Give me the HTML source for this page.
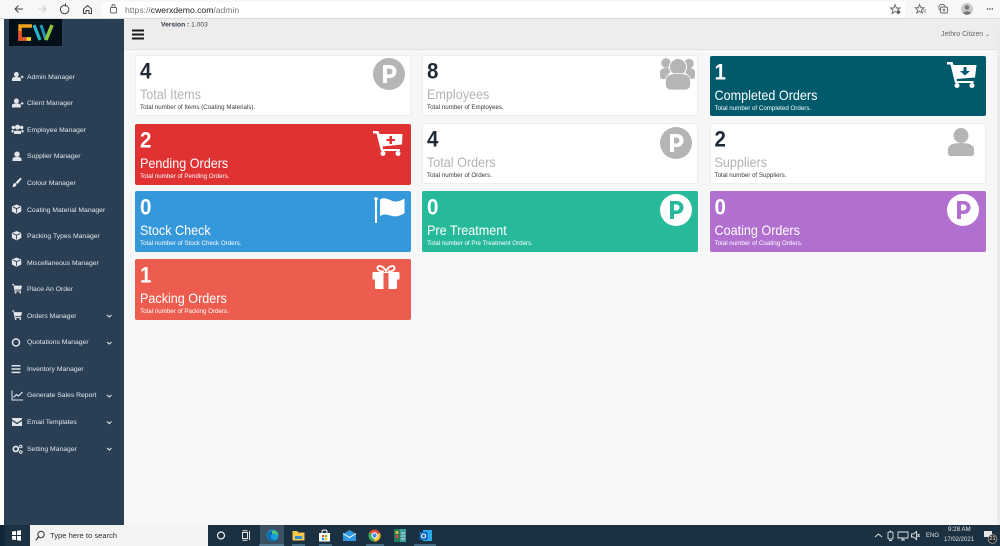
<!DOCTYPE html>
<html><head><meta charset="utf-8"><title>CWerx Admin</title>
<style>
*{box-sizing:border-box}
html{margin:0;padding:0;width:1000px;height:546px;overflow:hidden;background:#f7f7f7}
body{margin:0;padding:0;width:1000px;height:546px;overflow:hidden;background:#f7f7f7;font-family:"Liberation Sans",sans-serif;filter:blur(.3px)}
.a{position:absolute}
#chrome{left:0;top:0;width:1000px;height:19px;background:#f7f7f7;border-bottom:1px solid #dcdcdc}
#addr{left:102px;top:2px;width:803px;height:15px;background:#fff;border-radius:3px}
#url{left:125px;top:3.500px;font-size:8.600px;line-height:12px;color:#777}
#url b{font-weight:400;color:#222}
#leftstrip{left:0;top:19px;width:4px;height:506px;background:#fff}
#side{left:4px;top:19px;width:120px;height:506px;background:#2a3f54}
#logo{left:9px;top:19px;width:53px;height:27px;background:#03101a}
#head{left:124px;top:19px;width:876px;height:31px;background:#ededed;border-bottom:1px solid #e2e2e2}
#ver{left:161px;top:20px;font-size:6.700px;line-height:9px;color:#3f4a55;transform:translateY(.5px)}
#ver b{color:#2e3a46}
#user{left:941px;top:30px;font-size:6.900px;line-height:9px;color:#666}
#sb{left:997px;top:26px;width:3px;height:499px;background:#ebebeb}
.m{position:absolute;left:27px;font-size:6.800px;line-height:9px;color:#e2e6ea;white-space:nowrap}
.c{position:absolute;width:276px;height:61px;border-radius:2px;background:#fff;border:1px solid #eceef0;color:#fff;overflow:hidden}
.n{position:absolute;left:5px;top:4px;font-weight:700;font-size:20.500px;line-height:24px;color:#fff;transform:scaleY(1.08);transform-origin:0 0}
.t{position:absolute;left:5px;top:32px;font-size:12.600px;line-height:16px;color:#fff;white-space:nowrap;transform:scaleY(1.06)}
.d{position:absolute;left:5px;top:48px;font-size:6.200px;line-height:9px;color:#fff;white-space:nowrap}
.w .n{color:#1f2a35;left:4px;top:3px}.w .t{color:#b4b4b4;left:4px;top:31px}.w .d{color:#3a3a3a;left:4px;top:47px}
.col{border:0}
.c svg{position:absolute}
#task{left:0;top:525px;width:1000px;height:21px;background:#1b3040}
#search{left:30px;top:525px;width:178px;height:21px;background:#f3f3f3}
#stxt{left:50px;top:530px;font-size:7.600px;line-height:11px;color:#333}
.tray{position:absolute;color:#e6e6e6;font-size:6.200px;line-height:8px;white-space:nowrap}
</style></head>
<body>
<div class="a" id="chrome"></div>
<div class="a" id="addr"></div>
<svg class="a" style="left:0;top:0" width="125" height="19" fill="none" stroke="#444" stroke-width="1">
<path d="M23 9H15M18.500 5.500L15 9L18.500 12.500"/>
<path d="M38 9H46M42.500 5.500L46 9L42.500 12.500" stroke="#ccc"/>
<path d="M68 7A4.200 4.200 0 1 1 65 5.300M65.500 3.500V6H68"/>
<path d="M83.500 9L87.500 5.500L91.500 9V13.500H89V10.500H86V13.500H83.500Z"/>
<rect x="110.500" y="7.500" width="6" height="5.500" rx="1" stroke="#666"/><path d="M112 7.500V6A1.500 1.500 0 0 1 115 6V7.500" stroke="#666"/>
</svg>
<div class="a" id="url">https://<b>cwerxdemo.com</b>/admin</div>
<svg class="a" style="left:885px;top:0" width="115" height="19" fill="none" stroke="#666" stroke-width=".9">
<path d="M10 4.500L11.500 8H15L12.300 10.200L13.200 13.500L10 11.500L7 13.500L8 10.200L5.500 8H9Z"/><circle cx="13.500" cy="12" r="1.800" fill="#666" stroke="none"/>
<path d="M34.500 4.500L35.800 7.700H39L36.500 9.800L37.300 13L34.500 11.200L31.800 13L32.600 9.800L30.300 7.700H33.500Z"/><path d="M38 10H41M38.500 12H41" stroke-width=".7"/>
<circle cx="57" cy="7.500" r="3.200"/><rect x="55.500" y="7" width="7" height="6" rx="1.500" fill="#f7f7f7"/><path d="M59 8.500V11.500M57.500 10H60.500"/>
<circle cx="82" cy="9" r="6" fill="#c9c9c9" stroke="none"/><circle cx="82" cy="7.500" r="2.300" fill="#777" stroke="none"/><path d="M78 13.200C78.500 10.800 85.500 10.800 86 13.200L82 15Z" fill="#777" stroke="none"/>
<circle cx="102.500" cy="9" r=".7" fill="#333" stroke="none"/><circle cx="104.900" cy="9" r=".7" fill="#333" stroke="none"/><circle cx="107.300" cy="9" r=".7" fill="#333" stroke="none"/>
</svg>

<div class="a" id="leftstrip"></div>
<div class="a" id="side"></div>
<div class="a" id="logo"></div>
<svg class="a" style="left:17px;top:23px" width="38" height="19" fill="none">
<path d="M15 3H3V16H14" stroke="#f0a21e" stroke-width="3.400"/>
<path d="M3 8V16H9" stroke="#e4502d" stroke-width="3.400"/>
<path d="M14 16H10" stroke="#f5d33a" stroke-width="3.400"/>
<path d="M17 2L23 17" stroke="#24b5c8" stroke-width="3.200"/>
<path d="M24 2L29 17" stroke="#1d94b8" stroke-width="3"/>
<path d="M29 17L35 2" stroke="#8cc63f" stroke-width="3.600"/>
</svg>

<div class="a" id="head"></div>
<svg class="a" style="left:132px;top:29px" width="12" height="11"><path d="M0 0.500H12V2.500H0ZM0 4.500H12V6.500H0ZM0 8.500H12V10.500H0Z" fill="#1a1a1a"/></svg>
<div class="a" id="ver"><b>Version :</b> 1.003</div>
<div class="a" id="user">Jethro Citizen <span style="font-size:6px">⌄</span></div>
<div class="a" id="sb"></div>

<!-- Sidebar icons -->
<svg class="a" style="left:0;top:0" width="124" height="525" fill="#e2e6ea">
<defs>
<g id="cube"><path d="M6.500 0L12.500 2.500V9L6.500 12L.5 9V2.500Z"/><path d="M1.800 3.300L6.500 5.300L11.200 3.300M6.500 5.300V10.800" stroke="#2a3f54" stroke-width="1.100" fill="none"/></g>
<g id="cart"><path d="M0 0H2.500L3 2H12.500L11.500 7H4L4.300 8.200H11.200V9.300H3.300L1.700 1.100H0Z"/><circle cx="4.500" cy="10.700" r="1.200"/><circle cx="10.300" cy="10.700" r="1.200"/></g>
<g id="usr"><circle cx="5" cy="2.800" r="2.800"/><path d="M0 10V7.500C0 6 2 5.500 5 5.500S10 6 10 7.500V10Z"/><path d="M10 5.500H13M11.500 4V7" stroke="#e2e6ea" stroke-width="1.200"/></g>
</defs>
<use href="#usr" transform="translate(12,72) scale(.88,.9)"/>
<use href="#usr" transform="translate(12,98.500) scale(.88,.9)"/>
<g transform="translate(11.500,124.500)"><circle cx="6" cy="2.600" r="2.500"/><circle cx="1.800" cy="3" r="1.700"/><circle cx="10.200" cy="3" r="1.700"/><path d="M2.500 9.500V7C2.500 5.800 9.500 5.800 9.500 7V9.500Z"/><path d="M0 8V6C0 5.500 1.500 5.300 2 5.500V8ZM12 8V6C12 5.500 10.500 5.300 10 5.500V8Z"/></g>
<g transform="translate(12.500,151.500)"><circle cx="4.500" cy="2.700" r="2.700"/><path d="M0 9.500V7.500C0 6 1.800 5.500 4.500 5.500S9 6 9 7.500V9.500Z"/></g>
<path d="M20 178C21.500 177.500 22 178.500 21 179.800L17.500 184L15.500 182.500ZM15 183C16.800 183.500 16.800 185.500 15.500 186.300C14.500 187 13 187.300 12 187C13 186.500 13 186 13 185C13.200 184 14 183 15 183Z"/>
<use href="#cube" transform="translate(11.500,204.500) scale(.78)"/><use href="#cube" transform="translate(11.500,231) scale(.78)"/><use href="#cube" transform="translate(11.500,257.500) scale(.78)"/>
<use href="#cart" transform="translate(12,284) scale(.8)"/><use href="#cart" transform="translate(12,310.500) scale(.8)"/>
<circle cx="16" cy="342.500" r="3.500" fill="none" stroke="#e2e6ea" stroke-width="1.500"/>
<path d="M11.500 365H20.500V366.500H11.500ZM11.500 368.300H20.500V369.800H11.500ZM11.500 371.600H20.500V373.100H11.500Z"/>
<g transform="translate(11.500,390.500)"><path d="M0 0V10H11.500V9H1V0Z"/><path d="M2 7L5 4L7 5.500L11 1.500" stroke="#e2e6ea" stroke-width="1.200" fill="none"/></g>
<g transform="translate(12,418)"><path d="M0 0H10V1.500L5 4.700L0 1.500ZM0 3L5 6.200L10 3V8H0Z"/></g>
<g transform="translate(12,444.500)"><circle cx="3.800" cy="4.500" r="2.500" fill="none" stroke="#e2e6ea" stroke-width="1.800"/><circle cx="8.800" cy="2" r="1.300" fill="none" stroke="#e2e6ea"/><circle cx="8.800" cy="7.500" r="1.300" fill="none" stroke="#e2e6ea"/></g>
<g fill="none" stroke="#e2e6ea" stroke-width="1.100">
<path d="M107 315L109.300 317L111.500 315"/><path d="M107 342L109.300 344L111.500 342"/><path d="M107 395L109.300 397L111.500 395"/><path d="M107 421.500L109.300 423.500L111.500 421.500"/><path d="M107 448L109.300 450L111.500 448"/>
</g>
</svg>
<div class="m" style="top:73px">Admin Manager</div>
<div class="m" style="top:99px">Client Manager</div>
<div class="m" style="top:126px">Employee Manager</div>
<div class="m" style="top:152px">Supplier Manager</div>
<div class="m" style="top:179px">Colour Manager</div>
<div class="m" style="top:206px">Coating Material Manager</div>
<div class="m" style="top:232px">Packing Types Manager</div>
<div class="m" style="top:259px">Miscellaneous Manager</div>
<div class="m" style="top:285px">Place An Order</div>
<div class="m" style="top:312px">Orders Manager</div>
<div class="m" style="top:338px">Quotations Manager</div>
<div class="m" style="top:365px">Inventory Manager</div>
<div class="m" style="top:391px">Generate Sales Report</div>
<div class="m" style="top:418px">Email Templates</div>
<div class="m" style="top:445px">Setting Manager</div>

<!-- Row 1 -->
<div class="c w" style="left:135px;top:55px"><div class="n">4</div><div class="t">Total Items</div><div class="d">Total number of Items (Coating Materials).</div>
<svg style="left:237px;top:2px" width="32" height="32"><circle cx="16" cy="16" r="16" fill="#b5b5b5"/><path d="M10 7H17A6.500 6.500 0 0 1 17 20H14V25H10ZM14 10.500V16.500H16.500A3 3 0 0 0 16.500 10.500Z" fill="#fff" fill-rule="evenodd"/></svg></div>
<div class="c w" style="left:422px;top:55px"><div class="n">8</div><div class="t">Employees</div><div class="d">Total number of Employees.</div>
<svg style="left:237px;top:2px" width="36" height="33" fill="#b5b5b5"><circle cx="6" cy="5" r="4.800"/><circle cx="29" cy="5.500" r="4.800"/><path d="M0 18V14C0 11 3 9.800 8 10C12 10.500 12 14 8 16V21H3C1 21 0 20 0 18ZM35 18V14C35 11 32 9.800 27 10C23 10.500 23 14 27 16V21H32C34 21 35 20 35 18Z"/><circle cx="18" cy="9" r="8.500" stroke="#fff" stroke-width="1"/><path d="M5.500 27V22C5.500 17 11 15.500 18 15.500S30.500 17 30.500 22V27C30.500 30 28 32 25 32H11C8 32 5.500 30 5.500 27Z" stroke="#fff" stroke-width=".8"/></svg></div>
<div class="c col" style="left:709.500px;top:55.500px;background:#015a6b;height:60.500px;width:276px"><div class="n">1</div><div class="t">Completed Orders</div><div class="d">Total number of Completed Orders.</div>
<svg style="left:237.500px;top:6.500px" width="31" height="26" fill="#fff"><path d="M0 0H5.500L6.500 3H29.500L28 15.500L9.500 17L10 19H26.500V21H8L3.500 2.500H0Z"/><circle cx="10" cy="23.500" r="2.500"/><circle cx="25" cy="23.500" r="2.500"/><path d="M16.500 5H19.500V9H23L18 13.500L13 9H16.500Z" fill="#015a6b"/></svg></div>

<!-- Row 2 -->
<div class="c col" style="left:135px;top:123.500px;background:#e03232"><div class="n">2</div><div class="t">Pending Orders</div><div class="d">Total number of Pending Orders.</div>
<svg style="left:238px;top:7px" width="31" height="26" fill="#fff"><path d="M0 0H5.500L6.500 3H29.500L29 13.500L9.500 15.500L10 18H27V20H8L3.500 2.500H0Z"/><circle cx="10" cy="22.500" r="2.500"/><circle cx="25" cy="22.500" r="2.500"/><path d="M16.500 5H19V8H22V10H19V13H16.500V10H13.500V8H16.500Z" fill="#e03232"/></svg></div>
<div class="c w" style="left:422px;top:123px"><div class="n">4</div><div class="t">Total Orders</div><div class="d">Total number of Orders.</div>
<svg style="left:237px;top:3px" width="32" height="32"><circle cx="16" cy="16" r="16" fill="#b5b5b5"/><path d="M10 7H17A6.500 6.500 0 0 1 17 20H14V25H10ZM14 10.500V16.500H16.500A3 3 0 0 0 16.500 10.500Z" fill="#fff" fill-rule="evenodd"/></svg></div>
<div class="c w" style="left:709.500px;top:123px"><div class="n">2</div><div class="t">Suppliers</div><div class="d">Total number of Suppliers.</div>
<svg style="left:237px;top:4px" width="26" height="29" fill="#b5b5b5"><circle cx="13" cy="7.500" r="7.500"/><path d="M0 25V21C0 17 5 15 13 15S26 17 26 21V25C26 27 25 28 23 28H3C1 28 0 27 0 25Z"/></svg></div>

<!-- Row 3 -->
<div class="c col" style="left:135px;top:191px;background:#3498db"><div class="n">0</div><div class="t">Stock Check</div><div class="d">Total number of Stock Check Orders.</div>
<svg style="left:238px;top:4px" width="33" height="30" fill="#fff"><circle cx="3" cy="4" r="1.800"/><rect x="2" y="4" width="2" height="24"/><path d="M7 4.500C13 .5 17 7 24 6.500C27 6 30 4.500 31.500 3.500V18C28 20.500 24 22 19 21C14 19.500 11 18.500 7 21Z"/></svg></div>
<div class="c col" style="left:422px;top:191px;background:#26b99a"><div class="n">0</div><div class="t">Pre Treatment</div><div class="d">Total number of Pre Treatment Orders.</div>
<svg style="left:238px;top:3px" width="32" height="32"><circle cx="16" cy="16" r="16" fill="#fff"/><path d="M10 7H17A6.500 6.500 0 0 1 17 20H14V25H10ZM14 10.500V16.500H16.500A3 3 0 0 0 16.500 10.500Z" fill="#26b99a" fill-rule="evenodd"/></svg></div>
<div class="c col" style="left:709.500px;top:191px;background:#b16fd0"><div class="n">0</div><div class="t">Coating Orders</div><div class="d">Total number of Coating Orders.</div>
<svg style="left:237.500px;top:3px" width="32" height="32"><circle cx="16" cy="16" r="16" fill="#fff"/><path d="M10 7H17A6.500 6.500 0 0 1 17 20H14V25H10ZM14 10.500V16.500H16.500A3 3 0 0 0 16.500 10.500Z" fill="#b16fd0" fill-rule="evenodd"/></svg></div>

<!-- Row 4 -->
<div class="c col" style="left:135px;top:259px;background:#ec5d4f"><div class="n">1</div><div class="t">Packing Orders</div><div class="d">Total number of Packing Orders.</div>
<svg style="left:237px;top:6px" width="29" height="25" fill="#fff"><path d="M1.500 7H26.500Q27.500 7 27.500 8V14.500H.5V8Q.5 7 1.500 7ZM3 14.500H25V23Q25 24 24 24H4Q3 24 3 23Z"/><path d="M12 6.500C7 6.500 5 4.500 5.500 2.500C6.500 0 11 .5 14 6C17 .5 21.500 0 22.500 2.500C23 4.500 21 6.500 16 6.500" fill="none" stroke="#fff" stroke-width="1.800"/><rect x="11.500" y="8" width="5" height="16" fill="#ec5d4f"/></svg></div>

<!-- Taskbar -->
<div class="a" id="task"></div>
<div class="a" style="left:0;top:525px;width:5px;height:21px;background:#12263a"></div>
<div class="a" id="search"></div>
<div class="a" id="stxt">Type here to search</div>
<div class="a" style="left:260px;top:525px;width:24px;height:21px;background:#3b5060"></div>
<svg class="a" style="left:0;top:525px" width="450" height="21" fill="none">
<path d="M12 6.500L16 6V10H12ZM17 5.800L21 5.200V10H17ZM12 11H16V15L12 14.500ZM17 11H21V15.800L17 15.200Z" fill="#fff"/>
<circle cx="41" cy="9.500" r="3.200" stroke="#333" stroke-width="1"/><path d="M38.500 12L36 15" stroke="#333" stroke-width="1.200"/>
<circle cx="221" cy="10.500" r="3.500" stroke="#f0f0f0" stroke-width="1.200"/>
<path d="M242.500 7.500H247.500V13.500H242.500ZM242.500 5.800H247.500M242.500 15.200H247.500M249.500 6V15" stroke="#e0e0e0" stroke-width="1"/>
<circle cx="272.500" cy="10.500" r="6" fill="#1a9fd8"/><path d="M267 9C270 4 277 4.500 278.500 10C276 8 272 8 271 11C270.500 14 273.500 15.500 276.500 15C274 17 270 17 268 14.500C266.800 13 266.800 11 267 9Z" fill="#0c6db5"/><path d="M272 6C275 5 278 7 278.500 10C276 8.500 273.500 8 272 9Z" fill="#58d068"/>
<path d="M292.500 6H297L298.500 7.500H304.500V15.500H292.500Z" fill="#f6c84b"/><rect x="295" y="11" width="7" height="3" fill="#2e8ecf"/>
<path d="M319 8H330V16.500H319Z" fill="#fff"/><path d="M322 8V6.500C322 4.500 327 4.500 327 6.500V8" stroke="#fff"/><rect x="322" y="10" width="2.200" height="2.200" fill="#e8532d"/><rect x="325" y="10" width="2.200" height="2.200" fill="#7fba00"/><rect x="322" y="13" width="2.200" height="2.200" fill="#00a4ef"/><rect x="325" y="13" width="2.200" height="2.200" fill="#ffb900"/>
<path d="M343 9L349.500 5L356 9V16H343Z" fill="#2f9ae0"/><path d="M343 8.500L349.500 12.500L356 8.500" stroke="#fff" stroke-width="1"/>
<circle cx="374.500" cy="10.500" r="6" fill="#dd4b3e"/><path d="M374.500 10.500L380 8A6 6 0 0 1 374 16.500Z" fill="#f5c033"/><path d="M374.500 10.500L374 16.500A6 6 0 0 1 369.200 7.500Z" fill="#38a853"/><circle cx="374.500" cy="10.500" r="2.700" fill="#4a8bf0" stroke="#fff"/>
<rect x="394" y="4" width="6" height="13" fill="#1f7a5e"/><rect x="400" y="4" width="6" height="13" fill="#3a9d9d"/><rect x="395.500" y="6" width="3" height="3" fill="#d9b43a"/><rect x="395.500" y="10" width="3" height="3" fill="#d04a3a"/><path d="M401 8H405M401 11H405M401 14H405" stroke="#e0e0e0"/>
<rect x="423" y="5" width="9" height="11" fill="#28a8ea"/><rect x="419.500" y="7" width="8" height="8" fill="#0f65b7"/><circle cx="423.500" cy="11" r="2" stroke="#fff" stroke-width="1.100"/>
<path d="M259 20H284M292 20H305M319 20H332M366 20H384M414 20H436" stroke="#6b9fc2" stroke-width="1"/>
</svg>
<svg class="a" style="left:870px;top:525px" width="130" height="21" fill="none" stroke="#e6e6e6" stroke-width=".9">
<path d="M5 12L8.500 9L12 12"/>
<rect x="18" y="7" width="5" height="7" rx="1"/><path d="M19 15.500H22M20.500 5.500V7"/>
<path d="M28 7H38V13H28ZM31 15H35M33 13V15"/>
<path d="M41.500 9V12H43.500L46.500 14.500V6.500L43.500 9ZM47.500 9L49.500 12M49.500 9L47.500 12"/>
<path d="M114 6H122V12H114Z" fill="#e6e6e6" stroke="none"/><circle cx="122.500" cy="14" r="4.300" fill="#222" stroke="#999"/>
</svg>
<div class="tray" style="left:926px;top:532px;font-size:6px">ENG</div>
<div class="tray" style="left:948px;top:526px;font-size:6.200px">9:28 AM</div>
<div class="tray" style="left:944px;top:536px;font-size:6px">17/02/2021</div>
<div class="tray" style="left:989.500px;top:535px;font-size:5.500px;color:#fff">21</div>
</body></html>
